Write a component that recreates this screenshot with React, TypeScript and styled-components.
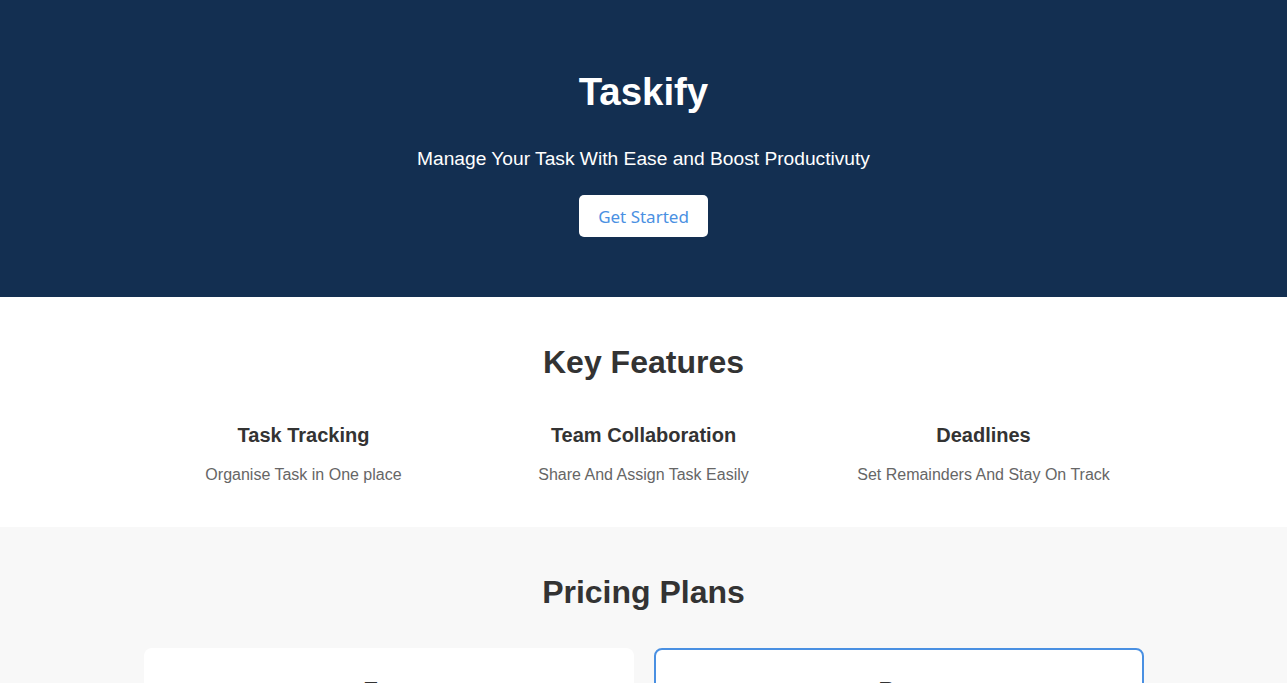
import React from "react";
import styled, { createGlobalStyle } from "styled-components";

const GlobalStyle = createGlobalStyle`
  * { box-sizing: border-box; }
  html, body { margin: 0; padding: 0; }
  body {
    font-family: "Liberation Sans", Arial, sans-serif;
    color: #333;
    background: #ffffff;
  }
`;

const Hero = styled.header`
  background: #132f51;
  color: #ffffff;
  text-align: center;
  padding: 70px 20px 60px;
  display: flex;
  flex-direction: column;
  align-items: center;
`;

const Brand = styled.h1`
  margin: 0 0 34px;
  font-size: 38.4px;
  line-height: 44px;
  font-weight: 700;
`;

const Tagline = styled.p`
  margin: 0 0 25px;
  font-size: 19.2px;
  line-height: 22px;
`;

const CtaButton = styled.button`
  height: 42px;
  padding: 0 19.5px;
  border: none;
  border-radius: 5px;
  background: #ffffff;
  color: #4a90e2;
  font-family: "Noto Sans", "Open Sans", sans-serif;
  font-size: 17px;
  cursor: pointer;
`;

const Section = styled.section<{ $bg?: string; $top: number; $bottom: number }>`
  background: ${(p) => p.$bg || "#ffffff"};
  padding: ${(p) => p.$top}px 20px ${(p) => p.$bottom}px;
  text-align: center;
`;

const SectionTitle = styled.h2<{ $gap: number }>`
  margin: 0 0 ${(p) => p.$gap}px;
  font-size: 32px;
  line-height: 37px;
  font-weight: 700;
  color: #333;
`;

const Grid = styled.div<{ $cols: number }>`
  width: 1000px;
  margin: 0 auto;
  display: grid;
  grid-template-columns: repeat(${(p) => p.$cols}, 1fr);
  gap: 20px;
`;

const Feature = styled.div`
  display: flex;
  flex-direction: column;
  align-items: center;
`;

const FeatureTitle = styled.h3`
  margin: 0 0 19px;
  font-size: 20px;
  line-height: 23px;
  font-weight: 700;
  color: #333;
`;

const FeatureText = styled.p`
  margin: 0;
  font-size: 16px;
  line-height: 18px;
  color: #666;
`;

const PlanCard = styled.div<{ $featured?: boolean }>`
  background: #ffffff;
  border-radius: 8px;
  border: 2px solid ${(p) => (p.$featured ? "#4a90e2" : "transparent")};
  padding: 27px 20px 30px;
  display: flex;
  flex-direction: column;
  align-items: center;
`;

const PlanName = styled.h3`
  margin: 0 0 16px;
  font-size: 24px;
  line-height: 28px;
  font-weight: 700;
  color: #333;
`;

const PlanPrice = styled.p`
  margin: 0 0 16px;
  font-size: 20px;
  color: #4a90e2;
  font-weight: 700;
`;

const PlanList = styled.ul`
  list-style: none;
  margin: 0 0 20px;
  padding: 0;
  color: #666;
  font-size: 16px;
  line-height: 28px;
`;

const PlanButton = styled.button`
  padding: 10px 20px;
  border: none;
  border-radius: 5px;
  background: #4a90e2;
  color: #fff;
  font-size: 16px;
`;

const features = [
  { title: "Task Tracking", text: "Organise Task in One place" },
  { title: "Team Collaboration", text: "Share And Assign Task Easily" },
  { title: "Deadlines", text: "Set Remainders And Stay On Track" },
];

const plans = [
  { name: "Free", price: "$0/month", items: ["Basic Task Management", "Up to 3 Projects"], featured: false },
  { name: "Pro", price: "$10/month", items: ["Unlimited Projects", "Team Collaboration", "Priority Support"], featured: true },
];

export default function App() {
  return (
    <>
      <GlobalStyle />
      <Hero>
        <Brand>Taskify</Brand>
        <Tagline>Manage Your Task With Ease and Boost Productivuty</Tagline>
        <CtaButton>Get Started</CtaButton>
      </Hero>
      <Section $top={47} $bottom={43}>
        <SectionTitle $gap={43}>Key Features</SectionTitle>
        <Grid $cols={3}>
          {features.map((f) => (
            <Feature key={f.title}>
              <FeatureTitle>{f.title}</FeatureTitle>
              <FeatureText>{f.text}</FeatureText>
            </Feature>
          ))}
        </Grid>
      </Section>
      <Section $bg="#f8f8f8" $top={47} $bottom={40}>
        <SectionTitle $gap={37}>Pricing Plans</SectionTitle>
        <Grid $cols={2}>
          {plans.map((p) => (
            <PlanCard key={p.name} $featured={p.featured}>
              <PlanName>{p.name}</PlanName>
              <PlanPrice>{p.price}</PlanPrice>
              <PlanList>
                {p.items.map((i) => (
                  <li key={i}>{i}</li>
                ))}
              </PlanList>
              <PlanButton>Choose Plan</PlanButton>
            </PlanCard>
          ))}
        </Grid>
      </Section>
    </>
  );
}
